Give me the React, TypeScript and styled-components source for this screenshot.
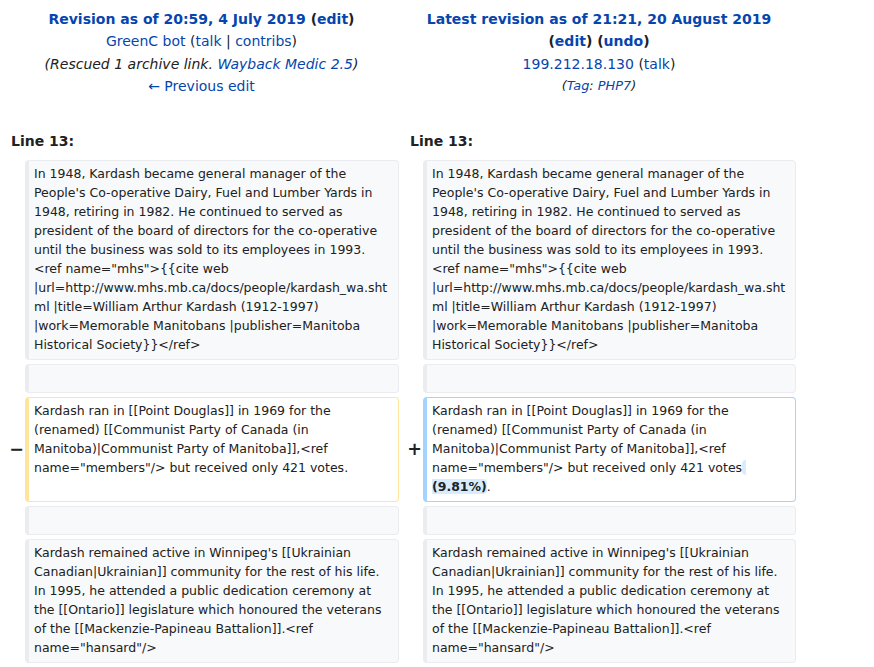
import styled, { createGlobalStyle } from 'styled-components'

const GlobalStyle = createGlobalStyle`
  body {
    margin: 0;
    background: #ffffff;
    color: #202122;
    font-family: "DejaVu Sans", sans-serif;
  }
  a {
    color: #0645ad;
    text-decoration: none;
  }
`

const Page = styled.div`
  padding: 8px 0 0 8px;
`

const DiffGrid = styled.div`
  display: grid;
  grid-template-columns: 17px 374px 24px 373px;
  row-gap: 4px;
  width: 788px;
`

const Header = styled.div`
  grid-column: ${({ $side }) => ($side === 'left' ? '1 / 3' : '3 / 5')};
  padding: ${({ $side }) => ($side === 'left' ? '0 4px 0 0' : '0 0 0 3px')};
  text-align: center;
  font-size: 14px;
  line-height: 22.4px;
`

const Title = styled.div`
  font-weight: bold;
  color: #202122;
`

const Comment = styled.div`
  font-style: italic;
  color: #202122;
`

const Tag = styled.div`
  font-style: italic;
  font-size: 12.9px;
`

const LineNo = styled.div`
  grid-column: ${({ $side }) => ($side === 'left' ? '1 / 3' : '3 / 5')};
  padding-left: ${({ $side }) => ($side === 'left' ? '3px' : '11px')};
  margin-top: 28px;
  margin-bottom: 4px;
  font-size: 14px;
  font-weight: bold;
  line-height: 22px;
`

const Marker = styled.div`
  display: flex;
  align-items: center;
  justify-content: center;
  padding-left: ${({ $side }) => ($side === 'left' ? '0' : '7px')};
  font-size: 17.5px;
  font-weight: bold;
  color: #202122;
`

const borderColor = {
  context: '#eaecf0',
  deleted: '#ffe49c',
  added: '#a3d3ff',
}

const Box = styled.div`
  box-sizing: border-box;
  min-height: 29px;
  padding: 3px 6px 5px 5px;
  border: 1px solid ${({ $kind }) => borderColor[$kind]};
  border-left-width: 4px;
  border-radius: 4px;
  background: ${({ $kind }) => ($kind === 'context' ? '#f8f9fa' : '#ffffff')};
  font-size: 12.5px;
  line-height: 19px;
  white-space: pre-wrap;
  overflow-wrap: break-word;
  color: #202122;
`

const Ins = styled.ins`
  text-decoration: none;
  font-weight: bold;
  background: #d8ecff;
  border-radius: 4px;
`

const textA =
  'In 1948, Kardash became general manager of the People\'s Co-operative Dairy, Fuel and Lumber Yards in 1948, retiring in 1982. He continued to served as president of the board of directors for the co-operative until the business was sold to its employees in 1993. <ref name="mhs">{{cite web |url=http://www.mhs.mb.ca/docs/people/kardash_wa.shtml |title=William Arthur Kardash (1912-1997) |work=Memorable Manitobans |publisher=Manitoba Historical Society}}</ref>'

const textB =
  'Kardash ran in [[Point Douglas]] in 1969 for the (renamed) [[Communist Party of Canada (in Manitoba)|Communist Party of Manitoba]],<ref name="members"/> but received only 421 votes'

const textC =
  'Kardash remained active in Winnipeg\'s [[Ukrainian Canadian|Ukrainian]] community for the rest of his life. In 1995, he attended a public dedication ceremony at the [[Ontario]] legislature which honoured the veterans of the [[Mackenzie-Papineau Battalion]].<ref name="hansard"/>'

const ContextRow = ({ text }) => (
  <>
    <Marker $side="left" />
    <Box $kind="context">{text}</Box>
    <Marker $side="right" />
    <Box $kind="context">{text}</Box>
  </>
)

export default function App() {
  return (
    <Page>
      <GlobalStyle />
      <DiffGrid>
        <Header $side="left">
          <Title>
            <a href="#">Revision as of 20:59, 4 July 2019</a> (<a href="#">edit</a>)
          </Title>
          <div>
            <a href="#">GreenC bot</a> (<a href="#">talk</a> | <a href="#">contribs</a>)
          </div>
          <Comment>
            (Rescued 1 archive link. <a href="#">Wayback Medic 2.5</a>)
          </Comment>
          <div>
            <a href="#">← Previous edit</a>
          </div>
        </Header>
        <Header $side="right">
          <Title>
            <a href="#">Latest revision as of 21:21, 20 August 2019</a>
          </Title>
          <Title>
            (<a href="#">edit</a>) (<a href="#">undo</a>)
          </Title>
          <div>
            <a href="#">199.212.18.130</a> (<a href="#">talk</a>)
          </div>
          <Tag>
            (<a href="#">Tag</a>: <a href="#">PHP7</a>)
          </Tag>
        </Header>

        <LineNo $side="left">Line 13:</LineNo>
        <LineNo $side="right">Line 13:</LineNo>

        <ContextRow text={textA} />
        <ContextRow text="" />

        <Marker $side="left">−</Marker>
        <Box $kind="deleted">{textB}.</Box>
        <Marker $side="right">+</Marker>
        <Box $kind="added">
          {textB}
          <Ins> (9.81%)</Ins>.
        </Box>

        <ContextRow text="" />
        <ContextRow text={textC} />
      </DiffGrid>
    </Page>
  )
}
